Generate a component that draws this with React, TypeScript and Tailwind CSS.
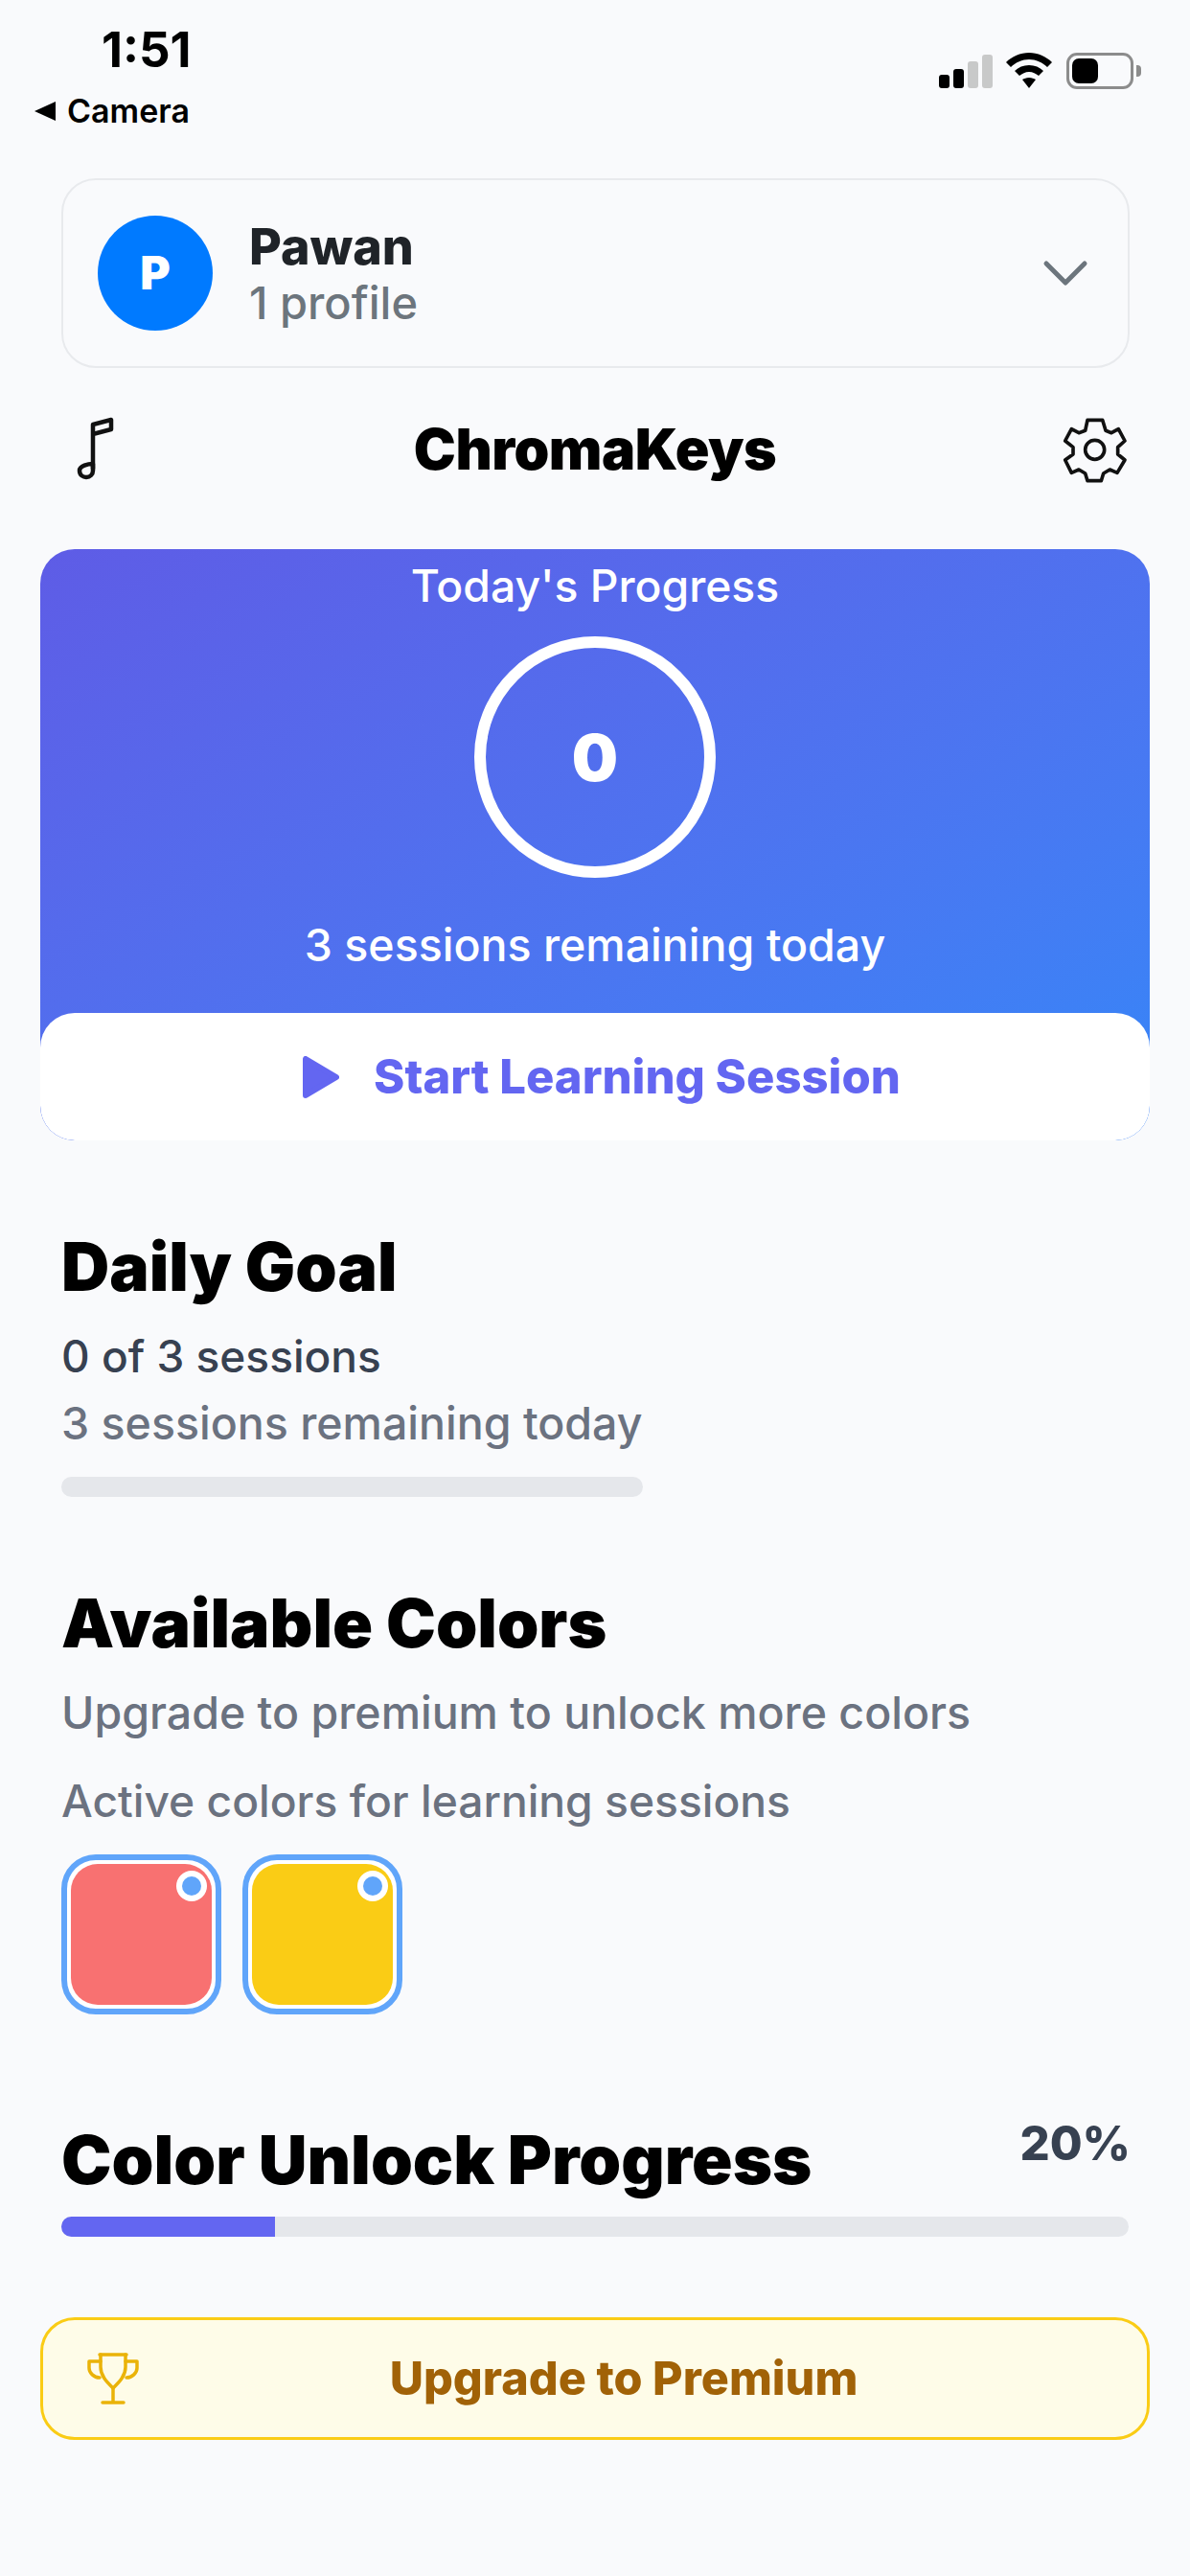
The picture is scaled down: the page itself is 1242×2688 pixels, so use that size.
import React from "react";
import { ChevronDown } from "lucide-react";

const MusicNote = () => (
  <svg width="120" height="110" viewBox="2 4 120 110" fill="none" stroke="#111" strokeWidth="4.5" strokeLinejoin="round" strokeLinecap="round">
    <path d="M57 79V33L76 28V38L57 43" />
    <path d="M57 74c-5 0-14 2-14 7 0 5 4 7 7 7 4 0 7-3 7-7z" />
  </svg>
);

const Gear = () => (
  <svg width="120" height="110" viewBox="0 12 360 330" fill="none" stroke="#111" strokeWidth="11" strokeLinejoin="round">
    <path d="M165 85H212L222 118L240 125L262 113L282 150L260 170V192L282 210L258 250L235 240L215 252L208 275H165L158 252L138 240L115 250L95 210L120 192V170L95 150L115 113L138 125L158 118Z" />
    <circle cx="188" cy="178" r="30" />
  </svg>
);

const Trophy = () => (
  <svg width="54" height="54" viewBox="0 0 54 54" fill="none" stroke="#eab308" strokeWidth="3.5" strokeLinecap="round" strokeLinejoin="round">
    <path d="M13 2H41" />
    <path d="M14 2V15C14 24 20 30 27 37C34 30 40 24 40 15V2" />
    <path d="M14 9H2V16C2 21 7 26 13 26" />
    <path d="M40 9H52V16C52 21 47 26 41 26" />
    <path d="M27 37V51" />
    <path d="M16 52H38" />
  </svg>
);

const Wifi = () => (
  <svg width="48" height="38" viewBox="0 0 48 38" fill="#000">
    <path d="M24 0C15 0 6 4 0 10l5 5c5-5 12-8 19-8s14 3 19 8l5-5C42 4 33 0 24 0z" />
    <path d="M24 13c-6 0-11 2-15 6l5 5c3-2 6-4 10-4s7 2 10 4l5-5c-4-4-9-6-15-6z" />
    <path d="M24 26c-3 0-5 1-7 2l7 9 7-9c-2-1-4-2-7-2z" />
  </svg>
);

const Swatch = ({ fill }: { fill: string }) => (
  <div className="relative h-[167px] w-[167px] rounded-[36px] border-[6px] border-[#60a5fa] bg-white p-[4px]">
    <div className={`h-full w-full rounded-[28px] ${fill}`} />
    <div className="absolute right-[9px] top-[11px] flex h-[32px] w-[32px] items-center justify-center rounded-full bg-white">
      <div className="h-[20px] w-[20px] rounded-full bg-[#60a5fa]" />
    </div>
  </div>
);

export default function App() {
  return (
    <div className="flex min-h-[2688px] w-[1242px] flex-col bg-[#f9fafc] font-['Inter',sans-serif]">
      <div className="flex h-[186px] items-start justify-between pl-[36px] pr-[51px]">
        <div className="flex flex-col">
          <div className="mt-[24px] pl-[70px] text-[51px] font-bold leading-[56px] text-black">1:51</div>
          <div className="mt-[16px] flex items-center gap-[12px] text-[34px] font-semibold leading-[40px] text-black">
            <span className="h-0 w-0 border-y-[10px] border-r-[22px] border-y-transparent border-r-black" />
            Camera
          </div>
        </div>
        <div className="mt-[55px] flex items-start">
          <div className="flex h-[37px] items-end gap-[4px]">
            <div className="h-[14px] w-[11px] rounded-[3px] bg-black" />
            <div className="h-[20px] w-[11px] rounded-[3px] bg-black" />
            <div className="h-[28px] w-[11px] rounded-[3px] bg-[#c8c9c9]" />
            <div className="h-[35px] w-[11px] rounded-[3px] bg-[#c8c9c9]" />
          </div>
          <div className="ml-[14px]"><Wifi /></div>
          <div className="ml-[15px] flex items-center">
            <div className="h-[38px] w-[70px] rounded-[11px] border-[3px] border-[#8c8c8c] p-[3px]">
              <div className="h-full w-[27px] rounded-[7px] bg-black" />
            </div>
            <div className="ml-[3px] h-[12px] w-[5px] rounded-r-[4px] bg-[#8c8c8c]" />
          </div>
        </div>
      </div>

      <div className="ml-[64px] mr-[63px] flex h-[198px] items-center rounded-[36px] border-2 border-[#e8eaed] pl-[36px] pr-[25px]">
        <div className="flex h-[120px] w-[120px] items-center justify-center rounded-full bg-[#007aff] text-[48px] font-black text-white">P</div>
        <div className="ml-[38px] flex-1">
          <div className="text-[52px] font-extrabold leading-[62px] text-[#1f2328]">Pawan</div>
          <div className="text-[47px] font-medium leading-[54px] text-[#6c757d]">1 profile</div>
        </div>
        <ChevronDown size={80} strokeWidth={1.5} color="#6c757d" />
      </div>

      <div className="mt-[30px] flex h-[110px] items-center px-[42px]">
        <div className="w-[120px]"><MusicNote /></div>
        <div className="flex-1 text-center text-[59px] font-black tracking-[-0.5px] text-black">ChromaKeys</div>
        <div className="w-[120px]"><Gear /></div>
      </div>

      <div className="mx-[42px] mt-[49px] h-[617px] overflow-hidden rounded-[36px] bg-gradient-to-br from-[#5e5ce6] to-[#3b82f6] to-90%">
        <div className="flex h-[484px] flex-col items-center">
          <div className="mt-[12px] text-[46.3px] font-medium leading-[52px] text-white">Today's Progress</div>
          <div className="mt-[27px] flex h-[252px] w-[252px] items-center justify-center rounded-full border-[12px] border-white text-[68px] font-black text-white">0</div>
          <div className="mt-[44px] text-[46.5px] font-medium leading-[52px] text-white">3 sessions remaining today</div>
        </div>
        <div className="flex h-[133px] items-center justify-center gap-[36px] rounded-[36px] bg-white pl-[14px]">
          <svg width="38" height="44" viewBox="0 0 38 44" fill="#6366f1" stroke="#6366f1" strokeWidth="6" strokeLinejoin="round">
            <path d="M3 3V41L35 22Z" />
          </svg>
          <div className="text-[49px] font-extrabold text-[#6366f1]">Start Learning Session</div>
        </div>
      </div>

      <div className="mx-[64px] mt-[92px]">
        <div className="text-[69.5px] font-black leading-[80px] text-black">Daily Goal</div>
        <div className="mt-[26px] text-[46px] font-medium leading-[54px] text-[#374151]">0 of 3 sessions</div>
        <div className="mt-[17px] text-[46.5px] font-medium leading-[52px] text-[#6b7280]">3 sessions remaining today</div>
        <div className="mt-[30px] h-[21px] w-[607px] rounded-full bg-[#e5e7eb]" />
      </div>

      <div className="mx-[64px] mt-[92px]">
        <div className="text-[69.5px] font-black leading-[80px] text-black">Available Colors</div>
        <div className="mt-[27px] text-[46.5px] font-medium leading-[52px] text-[#6b7280]">Upgrade to premium to unlock more colors</div>
        <div className="mt-[40px] text-[46.2px] font-medium leading-[52px] text-[#6b7280]">Active colors for learning sessions</div>
        <div className="mt-[30px] flex gap-[22px]">
          <Swatch fill="bg-[#f87171]" />
          <Swatch fill="bg-[#facc15]" />
        </div>
      </div>

      <div className="mx-[64px] mt-[112px]">
        <div className="flex items-start justify-between">
          <div className="text-[70.3px] font-black leading-[80px] text-black">Color Unlock Progress</div>
          <div className="mr-[-2px] text-[49px] font-extrabold leading-[46px] text-[#374151]">20%</div>
        </div>
        <div className="mt-[19px] h-[21px] overflow-hidden rounded-full bg-[#e5e7eb]">
          <div className="h-full w-[20%] bg-[#6366f1]" />
        </div>
      </div>

      <div className="mx-[42px] mt-[84px] flex h-[128px] items-center rounded-[36px] border-[3px] border-[#facc15] bg-[#fefce8] pl-[46px] pr-[40px]">
        <Trophy />
        <div className="flex-1 text-center text-[48.5px] font-extrabold text-[#a16207]">Upgrade to Premium</div>
      </div>
    </div>
  );
}
